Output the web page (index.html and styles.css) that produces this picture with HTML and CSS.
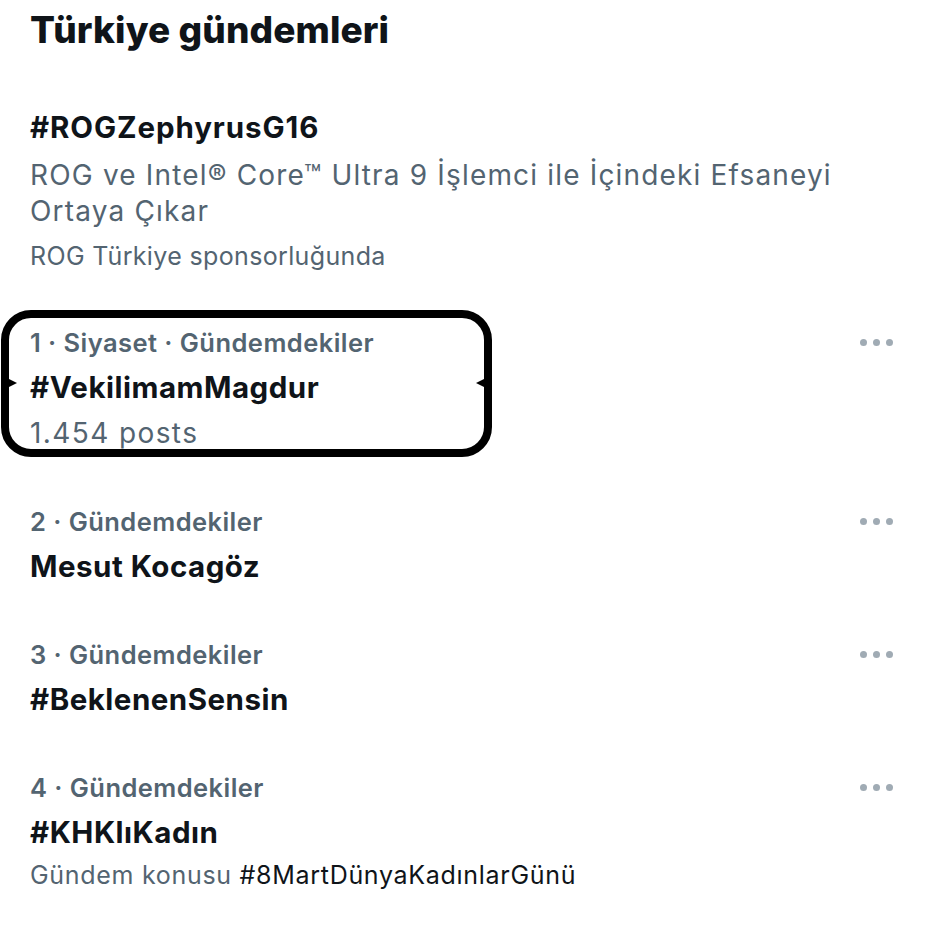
FILE: index.html
```html
<!DOCTYPE html>
<html lang="tr">
<head>
<meta charset="utf-8">
<link rel="stylesheet" href="styles.css">
</head>
<body>
<main class="panel">
  <h1 class="title">Türkiye gündemleri</h1>

  <section class="promo">
    <div class="name name-wide">#ROGZephyrusG16</div>
    <div class="desc">ROG ve Intel® Core™ Ultra 9 İşlemci ile İçindeki Efsaneyi Ortaya Çıkar</div>
    <div class="sponsor">ROG Türkiye sponsorluğunda</div>
  </section>

  <section class="trend trend-marked">
    <div class="row">
      <div class="meta">1 · Siyaset · Gündemdekiler</div>
      <div class="more"><span></span><span></span><span></span></div>
    </div>
    <div class="name">#VekilimamMagdur</div>
    <div class="posts">1.454 posts</div>
    <div class="marker"><i class="spike spike-l"></i><i class="spike spike-r"></i></div>
  </section>

  <section class="trend">
    <div class="row">
      <div class="meta">2 · Gündemdekiler</div>
      <div class="more"><span></span><span></span><span></span></div>
    </div>
    <div class="name">Mesut Kocagöz</div>
  </section>

  <section class="trend">
    <div class="row">
      <div class="meta">3 · Gündemdekiler</div>
      <div class="more"><span></span><span></span><span></span></div>
    </div>
    <div class="name">#BeklenenSensin</div>
  </section>

  <section class="trend">
    <div class="row">
      <div class="meta">4 · Gündemdekiler</div>
      <div class="more"><span></span><span></span><span></span></div>
    </div>
    <div class="name">#KHKlıKadın</div>
    <div class="topic">Gündem konusu <span class="tag">#8MartDünyaKadınlarGünü</span></div>
  </section>
</main>
</body>
</html>
```

FILE: styles.css
```css
* { box-sizing: border-box; margin: 0; padding: 0; }
html, body { background: #ffffff; }
body {
  font-family: Inter, "Noto Sans", "Liberation Sans", sans-serif;
  color: #0f1419;
  width: 945px;
  height: 925px;
  overflow: hidden;
}
.panel {
  display: flex;
  flex-direction: column;
  padding: 6px 0 0 30px;
}
.title {
  font-size: 37px;
  font-weight: 800;
  line-height: 48px;
  letter-spacing: 0.1px;
}
.promo {
  display: flex;
  flex-direction: column;
  margin-top: 51px;
}
.name {
  font-size: 29.5px;
  font-weight: 700;
  line-height: 45px;
  letter-spacing: 0.5px;
}
.name-wide { letter-spacing: 0.9px; }
.desc {
  margin-top: 7px;
  font-size: 28px;
  font-weight: 400;
  color: #536471;
  line-height: 36px;
  letter-spacing: 1.17px;
  width: 840px;
}
.sponsor {
  margin-top: 5px;
  font-size: 25px;
  color: #536471;
  line-height: 44px;
  letter-spacing: 0.35px;
}
.trend {
  position: relative;
  display: flex;
  flex-direction: column;
  padding-right: 52px;
}
.trend-marked { margin-top: 42px; }
.trend + .trend { margin-top: 43px; }
.row {
  display: flex;
  align-items: center;
  justify-content: space-between;
}
.meta {
  font-size: 25.5px;
  font-weight: 600;
  color: #536471;
  line-height: 45px;
  letter-spacing: 0.45px;
}
.more {
  display: flex;
  gap: 6px;
}
.more span {
  width: 7px;
  height: 7px;
  border-radius: 50%;
  background: #a0abb4;
}
.posts {
  font-size: 28px;
  color: #536471;
  line-height: 46px;
  letter-spacing: 1.4px;
}
.topic {
  font-size: 25px;
  color: #536471;
  line-height: 40px;
  letter-spacing: 0.7px;
}
.tag { color: #0f1419; }
.marker {
  position: absolute;
  left: -29px;
  top: -10px;
  width: 491px;
  height: 147px;
  border: 8px solid #000;
  border-radius: 30px;
  pointer-events: none;
}
.spike {
  position: absolute;
  top: 61px;
  width: 0;
  height: 0;
  border-top: 4px solid transparent;
  border-bottom: 4px solid transparent;
}
.spike-l { left: 0; border-left: 8px solid #000; }
.spike-r { right: 0; border-right: 8px solid #000; }
```
